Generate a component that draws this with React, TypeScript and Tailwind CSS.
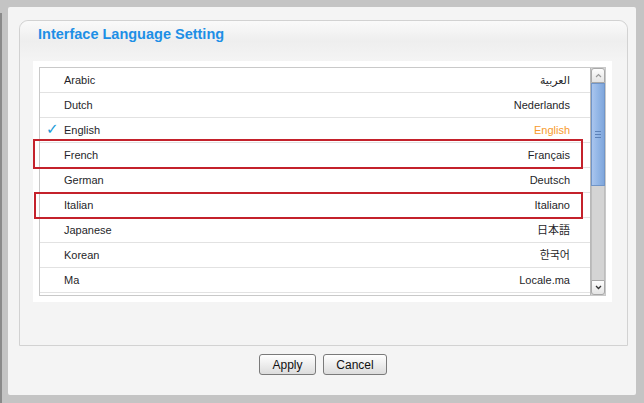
const languages = [
  { name: "Arabic", native: "العربية" },
  { name: "Dutch", native: "Nederlands" },
  { name: "English", native: "English", selected: true },
  { name: "French", native: "Français" },
  { name: "German", native: "Deutsch" },
  { name: "Italian", native: "Italiano" },
  { name: "Japanese", native: "日本語" },
  { name: "Korean", native: "한국어" },
  { name: "Ma", native: "Locale.ma" },
];

const Scrollbar = () => {
  return (
    <div className="flex flex-col w-[15px] shrink-0 bg-[#d4d4d4] border-l border-[#b8b8b8]">
      <div className="h-[15px] flex items-center justify-center rounded-t-[3px] border border-[#a8a8a8] bg-gradient-to-b from-[#fdfdfd] to-[#e4e4e4]">
        <svg width="7" height="5" viewBox="0 0 7 5">
          <path d="M1 4 L3.5 1.5 L6 4" stroke="#9a9a9a" strokeWidth="1.2" fill="none" />
        </svg>
      </div>
      <div className="h-[103px] flex items-center justify-center border border-[#7095c8] bg-gradient-to-r from-[#a9c5ee] via-[#92b6e6] to-[#7fa6dc]">
        <div className="flex flex-col gap-[2px]">
          <span className="block w-[6px] h-px bg-[#5d82b8]"></span>
          <span className="block w-[6px] h-px bg-[#5d82b8]"></span>
          <span className="block w-[6px] h-px bg-[#5d82b8]"></span>
        </div>
      </div>
      <div className="flex-1 border-x border-[#bdbdbd]"></div>
      <div className="h-[15px] flex items-center justify-center rounded-b-[3px] border border-[#a8a8a8] bg-gradient-to-b from-[#fdfdfd] to-[#e4e4e4]">
        <svg width="7" height="5" viewBox="0 0 7 5">
          <path d="M1 1 L3.5 3.5 L6 1" stroke="#333" strokeWidth="1.3" fill="none" />
        </svg>
      </div>
    </div>
  );
};

const App = () => {
  return (
    <div
      className="relative w-[644px] h-[403px] bg-[#c4c4c4] pl-[8px] pt-[7px] overflow-hidden"
      style={{ fontFamily: '"Liberation Sans", "DejaVu Sans", "Noto Sans CJK JP", "Noto Sans CJK KR", sans-serif' }}
    >
      <span className="absolute left-0 top-[13px] bottom-0 w-[2px] bg-[#8a8a8a]"></span>
      <div className="w-[628px] h-[388px] bg-[#f4f4f4] rounded-[2px] pl-[11px] pt-[13px] flex flex-col">
        <div className="w-[609px] h-[326px] border border-[#d2d2d2] rounded-t-[9px] bg-[#f4f4f4] flex flex-col">
          <div className="h-[40px] rounded-t-[9px] bg-gradient-to-b from-[#fafafa] via-[#eeeeee] to-[#f4f4f4] pl-[18px] pt-[5px]">
            <p className="text-[14.5px] leading-[16px] font-bold text-[#1d8fe6] select-none">
              Interface Language Setting
            </p>
          </div>
          <div className="relative ml-[13px] w-[579px] h-[241px] bg-white p-[6px] pb-[7px]">
            <div className="flex h-[229px] border border-[#c9c9c9] overflow-hidden">
              <ul className="flex-1 flex flex-col">
                {languages.map((lang) => (
                  <li
                    key={lang.name}
                    className="relative shrink-0 h-[25px] flex items-center justify-between border-b border-[#e2e2e2] pl-[24px] pr-[20px] text-[11px] text-[#1f1f2a]"
                  >
                    {lang.selected && (
                      <span className="absolute left-[6px] top-[3px] text-[15px] leading-[16px] text-[#1a9ad8] italic">
                        ✓
                      </span>
                    )}
                    <span>{lang.name}</span>
                    <span className={lang.selected ? "text-[#f79a2c]" : ""}>{lang.native}</span>
                  </li>
                ))}
              </ul>
              <Scrollbar />
            </div>
            <span className="absolute left-0 top-[78px] w-[550px] h-[30px] border-2 border-[#c4212b]"></span>
            <span className="absolute left-[1px] top-[131px] w-[549px] h-[27px] border-2 border-[#c4212b]"></span>
          </div>
        </div>
        <div className="flex justify-center gap-[7px] mt-[8px] pr-[9px]">
          <button className="w-[57px] h-[21px] rounded-[3px] border border-[#7a7a7a] bg-gradient-to-b from-[#ffffff] to-[#dcdcdc] text-[12px] text-[#111]">
            Apply
          </button>
          <button className="w-[64px] h-[21px] rounded-[3px] border border-[#7a7a7a] bg-gradient-to-b from-[#ffffff] to-[#dcdcdc] text-[12px] text-[#111]">
            Cancel
          </button>
        </div>
      </div>
    </div>
  );
};

export default App;
